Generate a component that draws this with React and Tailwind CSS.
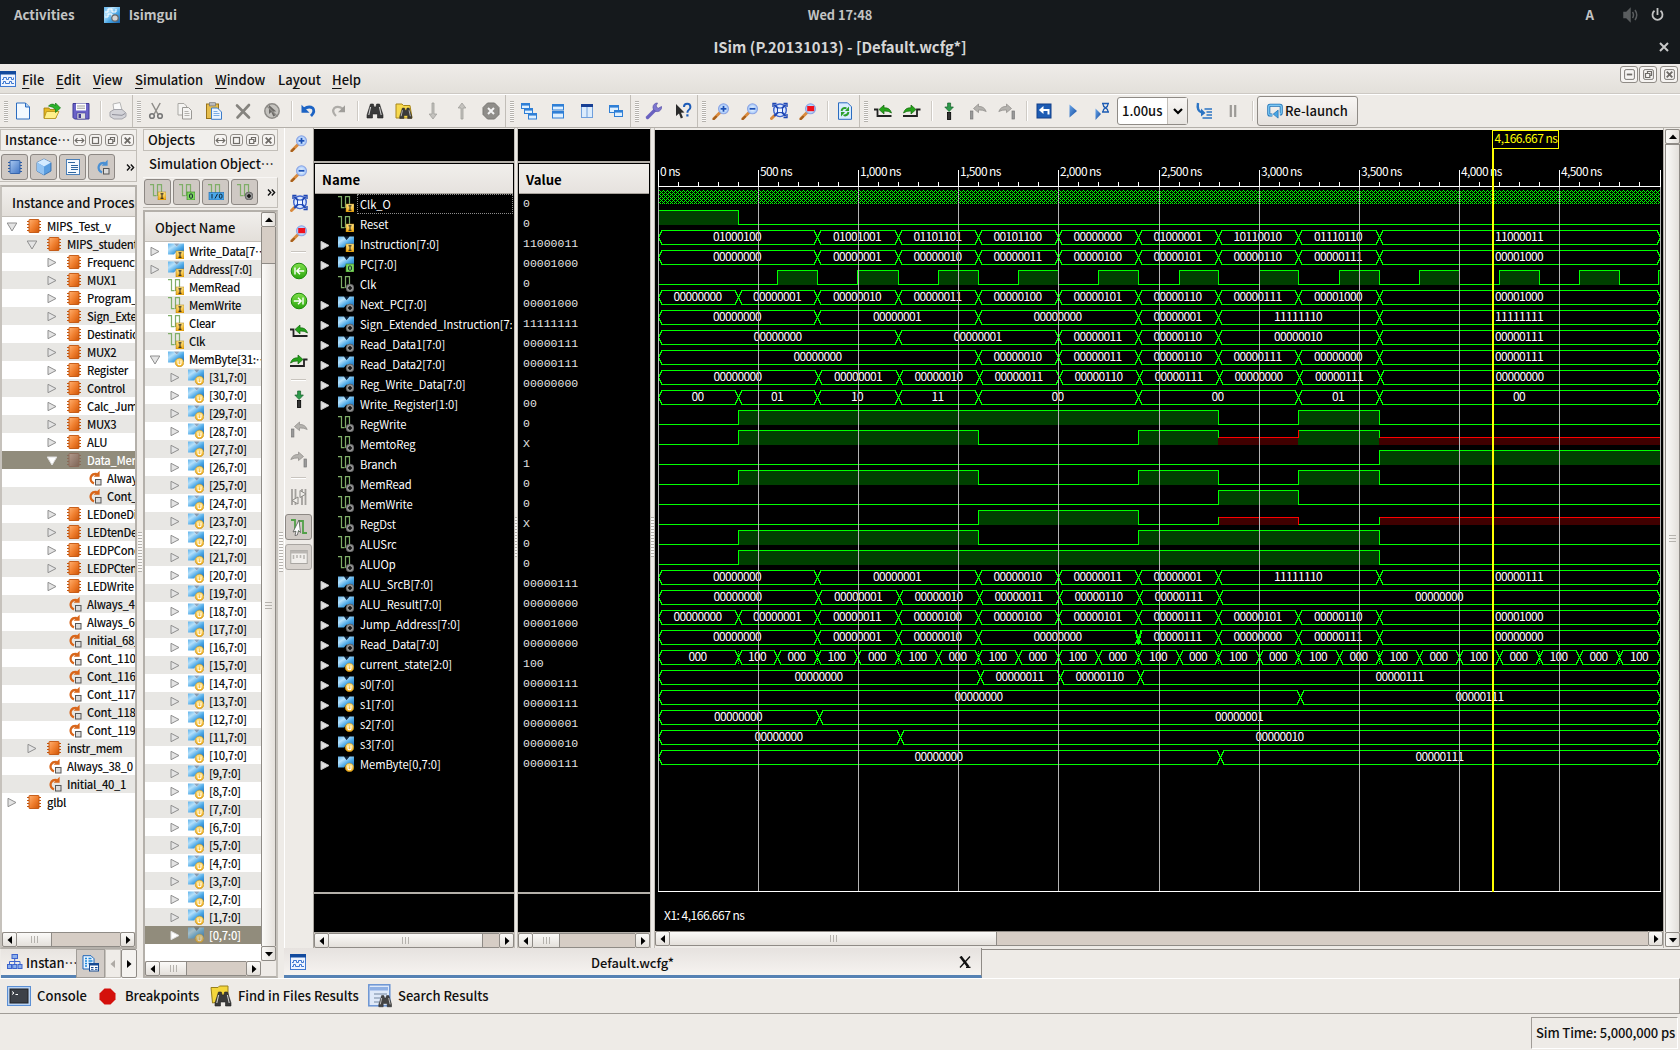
import React from "react";

const UI = "font-['Noto_Sans_CJK_SC','Noto_Sans',sans-serif]";

/* ---------- data ---------- */

const TREE = [
  [0, "open", "chip", "MIPS_Test_v"],
  [1, "open", "chip", "MIPS_student"],
  [2, "closed", "chip", "Frequency"],
  [2, "closed", "chip", "MUX1"],
  [2, "closed", "chip", "Program_Co"],
  [2, "closed", "chip", "Sign_Extend"],
  [2, "closed", "chip", "Destination"],
  [2, "closed", "chip", "MUX2"],
  [2, "closed", "chip", "Register"],
  [2, "closed", "chip", "Control"],
  [2, "closed", "chip", "Calc_Jump"],
  [2, "closed", "chip", "MUX3"],
  [2, "closed", "chip", "ALU"],
  [2, "open", "chip", "Data_Mem", true],
  [3, "", "proc", "Always_1"],
  [3, "", "proc", "Cont_12"],
  [2, "closed", "chip", "LEDoneDig"],
  [2, "closed", "chip", "LEDtenDec"],
  [2, "closed", "chip", "LEDPCone"],
  [2, "closed", "chip", "LEDPCten"],
  [2, "closed", "chip", "LEDWrite"],
  [2, "", "proc", "Always_48"],
  [2, "", "proc", "Always_60"],
  [2, "", "proc", "Initial_68_"],
  [2, "", "proc", "Cont_110"],
  [2, "", "proc", "Cont_116"],
  [2, "", "proc", "Cont_117"],
  [2, "", "proc", "Cont_118"],
  [2, "", "proc", "Cont_119"],
  [1, "closed", "chip", "instr_mem"],
  [1, "", "proc", "Always_38_0"],
  [1, "", "proc", "Initial_40_1"],
  [0, "closed", "chip", "glbl"],
];

const OBJECTS = [
  [0, "closed", "bus", "I", "Write_Data[7…"],
  [0, "closed", "bus", "I", "Address[7:0]"],
  [0, "", "sig", "I", "MemRead"],
  [0, "", "sig", "I", "MemWrite"],
  [0, "", "sig", "I", "Clear"],
  [0, "", "sig", "I", "Clk"],
  [0, "open", "bus", "V", "MemByte[31:…"],
  ...Array.from({ length: 32 }, (_, i) => [1, "closed", "bus", "V", `[${31 - i},7:0]`, i === 31]),
];

const Z = "00000000";
const b = (n) => n.toString(2).padStart(8, "0");
const END = 12.5;

const SIGNALS = [
  { n: "Clk_O", k: "I", v: "0", dense: true },
  { n: "Reset", k: "I", v: "0", lv: [[0, "1"], [1, "0"]] },
  { n: "Instruction[7:0]", k: "I", v: "11000011", bus: [[0, "01000100"], [2, "01001001"], [3, "01101101"], [4, "00101100"], [5, Z], [6, "01000001"], [7, "10110010"], [8, "01110110"], [9, "11000011"]] },
  { n: "PC[7:0]", k: "O", v: "00001000", bus: [[0, Z], ...[1, 2, 3, 4, 5, 6, 7, 8].map((i) => [i + 1, b(i)])] },
  { n: "Clk", k: "+", v: "0", lv: [[0, "0"], ...Array.from({ length: 11 }, (_, i) => [[i + 1.5, "1"], [i + 2, "0"]]).flat(), [12.48, "1"]] },
  { n: "Next_PC[7:0]", k: "+", v: "00001000", bus: [...[0, 1, 2, 3, 4, 5, 6, 7, 8].map((i) => [i, b(i)]), [9, b(8)]] },
  { n: "Sign_Extended_Instruction[7:0]", k: "+", v: "11111111", bus: [[0, Z], [2, b(1)], [4, Z], [6, b(1)], [7, "11111110"], [9, "11111111"]] },
  { n: "Read_Data1[7:0]", k: "+", v: "00000111", bus: [[0, Z], [3, b(1)], [5, b(3)], [6, b(6)], [7, b(2)], [9, b(7)]] },
  { n: "Read_Data2[7:0]", k: "+", v: "00000111", bus: [[0, Z], [4, b(2)], [5, b(3)], [6, b(6)], [7, b(7)], [8, Z], [9, b(7)]] },
  { n: "Reg_Write_Data[7:0]", k: "+", v: Z, off: 1, bus: [[0, Z], [2, b(1)], [3, b(2)], [4, b(3)], [5, b(6)], [6, b(7)], [7, Z], [8, b(7)], [9, Z]] },
  { n: "Write_Register[1:0]", k: "+", v: "00", bus: [[0, "00"], [1, "01"], [2, "10"], [3, "11"], [4, "00"], [6, "00"], [8, "01"], [9, "00"]] },
  { n: "RegWrite", k: "+", v: "0", lv: [[0, "0"], [1, "1"], [7, "0"], [8, "1"], [9, "0"]] },
  { n: "MemtoReg", k: "+", v: "X", lv: [[0, "0"], [1, "1"], [4, "0"], [6, "1"], [7, "X"], [8, "1"], [9, "X"]] },
  { n: "Branch", k: "+", v: "1", lv: [[0, "0"], [9, "1"]] },
  { n: "MemRead", k: "+", v: "0", lv: [[0, "0"], [1, "1"], [4, "0"], [6, "1"], [7, "0"], [8, "1"], [9, "0"]] },
  { n: "MemWrite", k: "+", v: "0", lv: [[0, "0"], [7, "1"], [8, "0"]] },
  { n: "RegDst", k: "+", v: "X", lv: [[0, "0"], [4, "1"], [6, "0"], [7, "X"], [8, "0"], [9, "X"]] },
  { n: "ALUSrc", k: "+", v: "0", lv: [[0, "0"], [1, "1"], [4, "0"], [6, "1"], [9, "0"]] },
  { n: "ALUOp", k: "+", v: "0", lv: [[0, "0"], [1, "1"], [9, "0"]] },
  { n: "ALU_SrcB[7:0]", k: "+", v: "00000111", bus: [[0, Z], [2, b(1)], [4, b(2)], [5, b(3)], [6, b(1)], [7, "11111110"], [9, b(7)]] },
  { n: "ALU_Result[7:0]", k: "+", v: Z, off: 1, bus: [[0, Z], [2, b(1)], [3, b(2)], [4, b(3)], [5, b(6)], [6, b(7)], [7, Z]] },
  { n: "Jump_Address[7:0]", k: "+", v: "00001000", bus: [[0, Z], [1, b(1)], [2, b(3)], [3, b(4)], [4, b(4)], [5, b(5)], [6, b(7)], [7, b(5)], [8, b(6)], [9, b(8)]] },
  { n: "Read_Data[7:0]", k: "+", v: Z, bus: [[0, Z], [2, b(1)], [3, b(2)], [4, Z], [6, b(7)], [7, Z], [8, b(7)], [9, Z]], glitch: [6] },
  { n: "current_state[2:0]", k: "V", v: "100", bus: [[0, "000"], ...Array.from({ length: 23 }, (_, i) => [1 + i / 2, i % 2 ? "000" : "100"])], ticks: true },
  { n: "s0[7:0]", k: "V", v: "00000111", off: 2, bus: [[0, Z], [4, b(3)], [5, b(6)], [6, b(7)]] },
  { n: "s1[7:0]", k: "V", v: "00000111", off: 2, bus: [[0, Z], [8, b(7)]] },
  { n: "s2[7:0]", k: "V", v: "00000001", off: 2, bus: [[0, Z], [2, b(1)]] },
  { n: "s3[7:0]", k: "V", v: "00000010", off: 2, bus: [[0, Z], [3, b(2)]] },
  { n: "MemByte[0,7:0]", k: "V", v: "00000111", off: 2, bus: [[0, Z], [7, b(7)]] },
];

/* ---------- small icons ---------- */

const Svg = ({ s = 16, vb = "0 0 16 16", children, className = "" }) => (
  <svg width={s} height={s} viewBox={vb} className={`block shrink-0 ${className}`} fill="none">
    {children}
  </svg>
);

const Defs = () => (
  <svg width="0" height="0" className="absolute">
    <defs>
      <linearGradient id="chipO" x1="0" y1="0" x2="1" y2="1"><stop offset="0" stopColor="#ffb070" /><stop offset=".5" stopColor="#f08030" /><stop offset="1" stopColor="#cf5608" /></linearGradient>
      <linearGradient id="chipB" x1="0" y1="0" x2="1" y2="1"><stop offset="0" stopColor="#a9c8f0" /><stop offset="1" stopColor="#3f74c4" /></linearGradient>
      <linearGradient id="chipG" x1="0" y1="0" x2="1" y2="1"><stop offset="0" stopColor="#b39a8c" /><stop offset="1" stopColor="#7d6455" /></linearGradient>
      <linearGradient id="busW" x1="0" y1="0" x2="1" y2="1"><stop offset="0" stopColor="#5fb2ea" /><stop offset=".3" stopColor="#b4e0fb" /><stop offset=".6" stopColor="#4aa7e6" /><stop offset="1" stopColor="#1763ad" /></linearGradient>
      <linearGradient id="gold" x1="0" y1="0" x2="0" y2="1"><stop offset="0" stopColor="#ffe68a" /><stop offset="1" stopColor="#f2a90e" /></linearGradient>
      <linearGradient id="play" x1="0" y1="0" x2="1" y2="1"><stop offset="0" stopColor="#6aa6ea" /><stop offset="1" stopColor="#124a9e" /></linearGradient>
      <radialGradient id="lens"><stop offset="0" stopColor="#fff" /><stop offset="1" stopColor="#9cc4fa" /></radialGradient>
      <linearGradient id="grn" x1="0" y1="0" x2="0" y2="1"><stop offset="0" stopColor="#7fe04a" /><stop offset="1" stopColor="#2ba50f" /></linearGradient>
    </defs>
  </svg>
);

const Chip = ({ fill = "url(#chipO)", leg = "#c2540c" }) => (
  <Svg>
    <path d="M1 3.500h14M1 6.500h14M1 9.500h14M1 12.500h14" stroke={leg} strokeWidth="1.200" />
    <rect x="3" y="1.500" width="10" height="13" rx=".6" fill={fill} stroke={leg} strokeWidth=".9" />
  </Svg>
);

const Proc = ({ c = "#d9661a" }) => (
  <Svg>
    <path d="M10.800 4A4.800 4.800 0 1 0 8 13.300" stroke={c} strokeWidth="2.300" />
    <path d="M13.600 .8v6H7.600z" fill={c} />
    <rect x="9.500" y="9.500" width="5.500" height="5.500" fill="#dcdcdc" stroke="#555" />
  </Svg>
);

const Badge = ({ k }) => {
  if (k === "I") return (<><rect x="8" y="8" width="8" height="8" fill="url(#gold)" stroke="#a87a10" strokeWidth=".5" /><path d="M10.500 9.800h3M12 9.800v4.600M10.500 14.300h3" stroke="#222" strokeWidth="1" /></>);
  if (k === "O") return (<><rect x="8" y="8" width="8" height="8" fill="#7fd660" stroke="#2e7d1a" strokeWidth=".6" /><rect x="10.600" y="10" width="2.800" height="4.200" rx="1" stroke="#112233" strokeWidth="1" /></>);
  if (k === "IO") return (<><rect x="1" y="8.500" width="15" height="7.500" fill="#4aa8ea" stroke="#1763ad" strokeWidth=".6" /><path d="M4 10v4.500M9.500 9.800L7 14.500" stroke="#112233" strokeWidth="1" /><rect x="11.400" y="10.200" width="2.600" height="4" rx="1" stroke="#112233" strokeWidth="1" /></>);
  if (k === "V") return (<><circle cx="11.500" cy="11.500" r="4.300" fill="url(#gold)" stroke="#b98a1c" strokeWidth=".6" /><path d="M10 9.500v2.900q0 1.300 1.500 1.300t1.500-1.300V9.500" stroke="#fff" strokeWidth="1.100" /></>);
  return (<><circle cx="12" cy="12" r="4" fill="#8f8f8f" stroke="#4a4a4a" strokeWidth=".6" /><path d="M10 12h4M12 10v4" stroke="#111" strokeWidth="1.500" /></>);
};

const SigIcon = ({ k }) => (
  <Svg><path d="M0 .7h3.500v11h3M7.500 12V.7h4V9" stroke="#7fae68" strokeWidth="1.200" /><Badge k={k} /></Svg>
);
const BusIcon = ({ k, dim }) => (
  <Svg className={dim ? "opacity-60" : ""}>
    <path d="M0 .5h6l2.500 3.500L11.500 .5H16v10.500H11L8.500 8.500 6 11.500H0z" fill="url(#busW)" />
    <path d="M6 .5h5.500L8.700 3.800z" fill="#1c4c80" fillOpacity=".5" /><Badge k={k} />
  </Svg>
);

const TriR = ({ fill = "#e4e4e4", stroke = "#8f8f8f" }) => (
  <svg width="10" height="11" viewBox="0 0 10 11" className="block shrink-0"><path d="M1 1.300v8.400L9 5.500z" fill={fill} stroke={stroke} /></svg>
);
const TriD = ({ fill = "#e4e4e4", stroke = "#8f8f8f" }) => (
  <svg width="12" height="10" viewBox="0 0 12 10" className="block shrink-0"><path d="M1.200 1h9.600L6 9z" fill={fill} stroke={stroke} /></svg>
);

const Mag = ({ t }) => (
  <Svg s={18} vb="0 0 18 18">
    <path d="M2 16.500L8 10.500" stroke="#d98a3d" strokeWidth="3" strokeLinecap="round" />
    <path d="M1.500 17.200L4 14.800" stroke="#a55f1d" strokeWidth="2" strokeLinecap="round" />
    <circle cx="11.500" cy="6.800" r="5" fill="url(#lens)" stroke="#8fa6e4" strokeWidth="1.100" />
    {t !== "sel" && <path d="M8.600 6.800h5.800" stroke="#1a4fb5" strokeWidth="1.800" />}
    {t === "in" && <path d="M11.500 3.900v5.800" stroke="#1a4fb5" strokeWidth="1.800" />}
    {t === "sel" && <rect x="8.200" y="4" width="7" height="5.200" fill="#f0101c" />}
  </Svg>
);
const MagFit = () => (
  <Svg s={18} vb="0 0 18 18">
    <path d="M1.500 16.500L4.500 13.500" stroke="#d98a3d" strokeWidth="3" strokeLinecap="round" />
    <circle cx="10" cy="8.300" r="6.300" fill="#dce9ff" stroke="#3d63cd" strokeWidth="1.400" />
    <path d="M4.300 2.600l11.400 11.400M15.700 2.600L4.300 14" stroke="#1d46b4" strokeWidth="1.800" />
    <path d="M3 5V1.500h3.500M13.500 1.500H17V5M17 12v3.500h-3.500" stroke="#1d46b4" strokeWidth="1.400" />
    <rect x="7.500" y="6" width="5" height="4.600" fill="#eef4ff" stroke="#1d46b4" />
  </Svg>
);
const EdgePrev = () => (
  <Svg s={18} vb="0 0 18 18"><path d="M0 7.500h3.500v6.500h14" stroke="#222" strokeWidth="1.800" /><path d="M5 7.500l5-4.500v2.800q6-.4 7.500 5.200-3-2.300-7.500-2v3z" fill="#25a31a" stroke="#14690f" strokeWidth=".7" /></Svg>
);
const EdgeNext = () => (
  <Svg s={18} vb="0 0 18 18"><path d="M0 14h14V7.500h3.500" stroke="#222" strokeWidth="1.800" /><path d="M13 7.500L8 3v2.800Q2 5.400.5 11q3-2.300 7.500-2v3z" fill="#25a31a" stroke="#14690f" strokeWidth=".7" /></Svg>
);
const Marker = () => (
  <Svg s={18} vb="0 0 18 18"><rect x="7.500" y="10.500" width="3.200" height="7" fill="#333" stroke="#000" strokeWidth=".8" /><path d="M7.600 1h3v4h2.800L9.100 9.600 4.800 5h2.800z" fill="#2c9a4a" stroke="#16602a" strokeWidth=".7" /></Svg>
);
const GreyPrev = () => (
  <Svg s={18} vb="0 0 18 18"><rect x="1.500" y="9" width="2.400" height="8" fill="#999" stroke="#777" strokeWidth=".7" /><path d="M4.500 6.500L9.500 2v2.500Q15 4 17.200 9.500 13.500 7.600 9.500 8v2.600z" fill="#b4b2ae" stroke="#8c8a86" strokeWidth=".7" /></Svg>
);
const GreyNext = () => (
  <Svg s={18} vb="0 0 18 18"><rect x="14" y="9" width="2.400" height="8" fill="#999" stroke="#777" strokeWidth=".7" /><path d="M13.500 6.500L8.500 2v2.500Q3 4 .8 9.500 4.500 7.600 8.500 8v2.600z" fill="#b4b2ae" stroke="#8c8a86" strokeWidth=".7" /></Svg>
);
const Binoc = ({ dx = 0, dy = 0, k = 1, c = "#3a3a3a" }) => (
  <g transform={`translate(${dx} ${dy}) scale(${k})`}>
    <path d="M4.500 2h2.800l.9 3h1.600l.9-3h2.800L17 13v3h-5.500v-4h-5v4H1v-3z" fill={c} stroke="#222" strokeWidth=".6" />
    <path d="M4.600 5L2.800 13M13.400 5l1.800 8" stroke="#cfcfcf" strokeWidth="1.100" />
  </g>
);
const Win = ({ x, y, w, h, c = "#2f7fd6" }) => (
  <g><rect x={x + 0.5} y={y + 0.5} width={w} height={h} fill="#dff0ff" stroke={c} /><rect x={x} y={y} width={w + 1} height="2.600" fill={c} /></g>
);
const Green = ({ next }) => (
  <Svg s={18} vb="0 0 18 18"><circle cx="9" cy="9" r="7.800" fill="url(#grn)" stroke="#1e8a0c" />{next
    ? <path d="M3.800 9h7M8 5.800L11.200 9 8 12.200M13 5.400v7.200" stroke="#fff" strokeWidth="1.400" />
    : <path d="M14.200 9h-7M10 5.800L6.800 9l3.200 3.200M5 5.400v7.200" stroke="#fff" strokeWidth="1.400" />}</Svg>
);

const I = {
  new: <Svg s={18} vb="0 0 18 18"><path d="M2.500 1h9l4 4v12h-13z" fill="#f3f9ff" stroke="#2b6cc0" /><path d="M11.500 1v4h4" fill="#a9cdf5" stroke="#2b6cc0" /></Svg>,
  open: <Svg s={18} vb="0 0 18 18"><path d="M1 6h5l1 1.500h6V16H1z" fill="#e8b820" stroke="#9c7a10" strokeWidth=".8" /><path d="M3.500 9.500H16L12.500 16.500H1z" fill="#fff08a" stroke="#b28e14" strokeWidth=".8" /><path d="M5.500 4Q9 .5 12.500 3.500V1L17.500 6 12.500 10.500V7.500Q10 4.500 5.500 4z" fill="#2bb32b" stroke="#167a16" strokeWidth=".7" /></Svg>,
  save: <Svg s={18} vb="0 0 18 18"><path d="M1 1.500h16v15.500H2.500L1 15.500z" fill="#6a62c8" stroke="#3f3a94" /><rect x="4" y="1.500" width="10" height="7" fill="#fff" /><path d="M5 4h8M5 6.200h8" stroke="#999" /><rect x="5" y="11" width="8.500" height="6" fill="#dedede" stroke="#3f3a94" strokeWidth=".6" /><rect x="6.500" y="12" width="2.500" height="4" fill="#3f3a94" /></Svg>,
  print: <Svg s={18} vb="0 0 18 18"><path d="M5 9L4 2l7-1.500 2 7.500z" fill="#fafafa" stroke="#b5b5b5" /><path d="M1 10l4-2.500h8L17 11v3.500L13 17H5l-4-2.500z" fill="#d3d3d8" stroke="#a5a5ab" /><path d="M3 12.500l10 .8 3-1.800" stroke="#8f8f99" /></Svg>,
  cut: <Svg s={18} vb="0 0 18 18"><path d="M4.800 1l6 11M13.200 1l-6 11" stroke="#8e8c88" strokeWidth="1.500" /><circle cx="5" cy="14" r="2.300" stroke="#777" strokeWidth="1.600" /><circle cx="13" cy="14" r="2.300" stroke="#777" strokeWidth="1.600" /></Svg>,
  copy: <Svg s={18} vb="0 0 18 18"><path d="M2 1.500h6l2.500 2.500v9H2z" fill="#f5f4f2" stroke="#aaa8a4" /><path d="M6.500 5.500h6l3 3V17h-9z" fill="#f5f4f2" stroke="#9a9894" /><path d="M8.500 9.500h4M8.500 11.500h5M8.500 13.500h5" stroke="#b5b3af" /></Svg>,
  paste: <Svg s={18} vb="0 0 18 18"><rect x="1.500" y="2" width="12" height="14.500" fill="#e6bd4c" stroke="#98731a" /><rect x="4.500" y=".7" width="6" height="3.200" fill="#bbb" stroke="#777" strokeWidth=".7" /><path d="M6.500 6h6l4 4v7.300h-10z" fill="#eaf4ff" stroke="#3d7cc9" /><path d="M8.500 9.500h4M8.500 11.500h6M8.500 13.500h6" stroke="#7caee4" /></Svg>,
  del: <Svg s={18} vb="0 0 18 18"><path d="M3 3.500L15 15.500M15 3L3.500 15.500" stroke="#86847f" strokeWidth="2.600" strokeLinecap="round" /></Svg>,
  desel: <Svg s={18} vb="0 0 18 18"><circle cx="9" cy="9" r="7.200" fill="#c4c2be" stroke="#8c8a86" strokeWidth="1.500" /><path d="M6 3v9l2.300-2 2 4.500 2-1-2-4h3z" fill="#6b6966" /><path d="M4 4l10.500 10.500" stroke="#8c8a86" strokeWidth="1.200" /></Svg>,
  undo: <Svg s={18} vb="0 0 18 18"><path d="M4 6.800Q9 3.500 12.800 6.200 15.500 9.500 11 14" stroke="#1c63c4" strokeWidth="2.800" /><path d="M1.500 2.800v8h8z" fill="#1c63c4" /></Svg>,
  redo: <Svg s={18} vb="0 0 18 18"><path d="M14 6.800Q9 3.500 5.200 6.200 2.500 9.500 7 14" stroke="#aeaca8" strokeWidth="2.200" /><path d="M16 3.200v7H9z" fill="#a09e9a" /></Svg>,
  find: <Svg s={18} vb="0 0 18 18"><Binoc /></Svg>,
  findf: <Svg s={18} vb="0 0 18 18"><path d="M1 2h6l1.500 1.500H15L17 16H1z" fill="#f7d94e" stroke="#a8861a" /><Binoc dx={4} dy={4.5} k={0.75} /></Svg>,
  down: <Svg s={18} vb="0 0 18 18"><path d="M8 1h2v11h2.800L9 17l-3.800-5H8z" fill="#c4c2be" stroke="#a09e9a" strokeWidth=".8" /></Svg>,
  up: <Svg s={18} vb="0 0 18 18"><path d="M8 17h2V6h2.800L9 1 5.200 6H8z" fill="#c4c2be" stroke="#a09e9a" strokeWidth=".8" /></Svg>,
  stop: <Svg s={18} vb="0 0 18 18"><path d="M5.500 1h7L17 5.500v7L12.500 17h-7L1 12.500v-7z" fill="#8f8d89" stroke="#7a7874" /><path d="M6 6l6 6M12 6l-6 6" stroke="#f4f4f4" strokeWidth="2" /></Svg>,
  cascade: <Svg s={18} vb="0 0 18 18"><Win x={1} y={1} w={8} h={5} /><Win x={4} y={6} w={8} h={5} /><Win x={8} y={11} w={8} h={5.5} /></Svg>,
  tileH: <Svg s={18} vb="0 0 18 18"><Win x={3} y={2} w={11} h={5.5} /><Win x={3} y={9} w={11} h={6.5} /></Svg>,
  tileV: <Svg s={18} vb="0 0 18 18"><rect x="3.500" y="3.500" width="11" height="12" fill="#dcecfc" stroke="#6f9fdc" /><path d="M9 4v11" stroke="#6f9fdc" /><rect x="3" y="2" width="12" height="3" fill="#173f94" /></Svg>,
  layer: <Svg s={18} vb="0 0 18 18"><Win x={2} y={3} w={9} h={7} /><Win x={7} y={8} w={8} h={6} /></Svg>,
  wrench: <Svg s={18} vb="0 0 18 18"><path d="M2.500 15.500l8-8" stroke="#6a62c0" strokeWidth="3.400" strokeLinecap="round" /><path d="M16.500 4.500a4.300 4.300 0 1 1-4-3.500L11 4l2 2.500z" fill="#7d76cf" stroke="#554da8" strokeWidth=".7" /></Svg>,
  help: <Svg s={18} vb="0 0 18 18"><path d="M2 2v12l3-2.600 1.800 5 2.200-1-2-4.700 3.500-.2z" fill="#2b2b2b" /><path d="M10 5q0-3.300 3.200-3.300T16.400 5q0 2-1.700 3-1.300.9-1.300 2.700" stroke="#1d5cb8" strokeWidth="2" /><rect x="12.300" y="12.300" width="2.200" height="2.200" fill="#1d5cb8" /></Svg>,
  refresh: <Svg s={18} vb="0 0 18 18"><path d="M2.500 .8h9l4 4v12.500h-13z" fill="#d8ecff" stroke="#2b6cc0" /><path d="M5.500 9q.5-3 3.500-3.200l1.500.5M12.500 10q-.5 3-3.500 3.500l-1.500-.5" stroke="#2ba02b" strokeWidth="1.800" /><path d="M13 4.500V9H9zM5 14.500V10h4z" fill="#2ba02b" /></Svg>,
  restart: <Svg s={18} vb="0 0 18 18"><rect x="2" y="2" width="14" height="14" fill="#1d5cb4" stroke="#123f88" /><path d="M13.500 12.500V8H7" stroke="#fff" strokeWidth="2" /><path d="M8.500 4v8L3.800 8z" fill="#fff" /></Svg>,
  play: <Svg s={18} vb="0 0 18 18"><path d="M5.500 2.500v13L13 9z" fill="url(#play)" /></Svg>,
  playh: <Svg s={18} vb="0 0 18 18"><path d="M2.500 6.500V18L8 12z" fill="url(#play)" /><path d="M9 1.500h7M9 10h7M10 2q0 2.500 2.500 3.800Q15 7 15 9.500M15 2q0 2.500-2.500 3.800Q10 7 10 9.500" stroke="#1d5cb4" strokeWidth="1.300" /></Svg>,
  step: <Svg s={18} vb="0 0 18 18"><path d="M3 1Q1.500 9 7 10.500" stroke="#2b74c4" strokeWidth="2.400" /><path d="M6 6.500v8L10.500 11z" fill="#2b74c4" /><path d="M9.500 7h7.500M11.500 10h5.500M11.500 13h5.500M7.500 16h9.500" stroke="#2b74c4" strokeWidth="1.300" /></Svg>,
  pause: <Svg s={18} vb="0 0 18 18"><path d="M6.800 3v12M11.200 3v12" stroke="#9c9a96" strokeWidth="2.200" /></Svg>,
  relaunch: <Svg s={16} vb="0 0 18 18"><path d="M6 13.500H3.500q-1.500 0-1.500-1.500V4q0-1.500 1.500-1.500h11Q16 2.500 16 4v7q0 1.500-1.500 1.500" stroke="#1c6fb4" strokeWidth="3.400" /><path d="M6 13.500H3.500q-1.500 0-1.500-1.500V4q0-1.500 1.500-1.500h11Q16 2.500 16 4v7q0 1.500-1.500 1.500" stroke="#7cc8f4" strokeWidth="1.600" /><path d="M12.500 8v9L7 12.500z" fill="#4aa6e4" stroke="#1c6fb4" strokeWidth=".8" /></Svg>,
  swap: <Svg s={18} vb="0 0 18 18"><path d="M2 1v16M5.500 1v16M12 1v16M15.500 1v16" stroke="#a3a19d" strokeWidth="1.800" /><path d="M10 2.500l6 3.500-6 3.500zM8 9l-6 3.500L8 16z" fill="#efede9" stroke="#8c8a86" /></Svg>,
  snap: <Svg s={18} vb="0 0 18 18"><path d="M1 2h4v12M9 14V2.500M13 2v13h4M9 3h4" stroke="#52a048" strokeWidth="1.800" /><path d="M9 2L3 14l3-.8-1 4.300 2.300-.5L8.500 12.500l2 2z" fill="#fff" stroke="#555" strokeWidth=".8" /></Svg>,
  ruler: <Svg s={18} vb="0 0 18 18"><rect x=".8" y="2.500" width="16.400" height="13" fill="#f3f2ef" stroke="#8c8a86" /><rect x=".8" y="2.500" width="16.400" height="3" fill="#a3a19d" /><path d="M3.500 7v4M7 7v3M10.500 7v3M14 7v4" stroke="#a3a19d" strokeWidth="1.600" /></Svg>,
  wave: <Svg><rect x=".5" y=".5" width="15" height="15" fill="#eef4ff" stroke="#3e78d0" /><rect width="16" height="3.500" fill="#124a9e" /><path d="M2 8.500h1.500v-2h3v2h2v-2h3v2h2v-2M2 12.500h1.500v-2h2v2h4v-2h2v2H14" stroke="#3e78d0" /></Svg>,
  cube: <Svg s={18} vb="0 0 18 18"><path d="M9 1l7 3.500v8.500L9 17l-7-4V4.500z" fill="#5b9ee0" stroke="#2e6aac" strokeWidth=".8" /><path d="M9 1l7 3.500L9 8.500 2 4.500z" fill="#d4ebff" /><path d="M2 4.500l7 4V17l-7-4z" fill="#94c4f2" /></Svg>,
  doc: <Svg s={18} vb="0 0 18 18"><rect x="2.500" y="1.500" width="13" height="15" fill="#f5faff" stroke="#4a7fb8" /><path d="M4 4.500h7M7 7.500h7M7 9.500h7M7 11.500h7M4 14.500h8" stroke="#2f669f" /></Svg>,
  hier: <Svg><rect x="5" y=".5" width="5.500" height="4" fill="#8db0ec" stroke="#3d63cd" /><rect x=".5" y="10.500" width="4" height="4" fill="#8db0ec" stroke="#3d63cd" /><rect x="11" y="10.500" width="4" height="4" fill="#8db0ec" stroke="#3d63cd" /><rect x="5.700" y="10.500" width="4" height="4" fill="#8db0ec" stroke="#3d63cd" /><path d="M7.700 4.500v6M2.500 10.500V7.500h10.500v3" stroke="#3d63cd" /></Svg>,
  docs: <Svg s={17} vb="0 0 17 17"><path d="M1 .7h8l3 3V14H1z" fill="#eaf4ff" stroke="#1d66b8" /><path d="M3 3.500h2M3 6h2M3 8.500h2M3 11h2M6.500 3.500h3M6.500 6h4M6.500 8.500h3" stroke="#1d86d8" strokeWidth="1.300" /><rect x="7.500" y="8.500" width="9" height="7.500" fill="#fff" stroke="#174a92" /><rect x="7" y="8" width="10" height="2.500" fill="#174a92" /><path d="M9 12.500h2.500M13 12.500h2.500M9 14.300h2.500M13 14.300h2.500" stroke="#174a92" /></Svg>,
};

/* ---------- chrome pieces ---------- */

const Grip = () => (
  <div className="flex h-full w-2 shrink-0 items-center pl-1">
    <div className="h-[21px] w-1 bg-[repeating-linear-gradient(to_bottom,#b5b2ad_0_1px,#fbfaf9_1px_2px)]" />
  </div>
);
const Sep = () => (
  <div className="flex h-full w-2 shrink-0 items-center justify-end pr-px"><div className="h-5 w-0.5 border-l border-[#cfcbc5] bg-white" /></div>
);
const TB = ({ children }) => <div className="flex h-full w-[29px] shrink-0 items-center justify-center">{children}</div>;
const Group = ({ w, items }) => (
  <div className={`flex h-full shrink-0 items-center border-r border-[#c2beb8] ${w}`}>
    <Grip />
    {items.map((it, i) => (it === "|" ? <Sep key={i} /> : <TB key={i}>{it}</TB>))}
  </div>
);

const RoundBtn = ({ t, big }) => (
  <div className={`flex shrink-0 items-center justify-center rounded-[3px] border border-[#8f8b86] bg-[#f6f4f2] ${big ? "h-[17px] w-[18px]" : "h-[12px] w-[13px]"}`}>
    <svg width="11" height="11" viewBox="0 0 11 11" fill="none" stroke="#6f6c68" strokeWidth="1.200">
      {big && <rect x=".6" y=".6" width="9.800" height="9.800" rx="1.500" strokeWidth=".9" />}
      {t === "float" && <path d="M1 5.500h9M3.500 3.200L1.200 5.500l2.300 2.300M7.500 3.200l2.300 2.300-2.300 2.300" />}
      {t === "max" && <rect x="2.500" y="2.500" width="6" height="6" />}
      {t === "rest" && <path d="M2.500 4.500h4.300v4H2.500zM4.500 4.300V2.500h4v4H7" />}
      {t === "close" && <path d="M2.700 2.700l5.600 5.600M8.300 2.700L2.700 8.300" strokeWidth="1.900" />}
      {t === "min" && <path d="M2.800 5.500h5.400" strokeWidth="1.800" />}
    </svg>
  </div>
);

const DockTitle = ({ children }) => (
  <div className="mt-px flex h-[22px] shrink-0 items-center border border-[#c2beb8] bg-[#f1efec] pl-1 pr-[2px]">
    <span className="flex-1 overflow-hidden whitespace-nowrap text-[13px] font-medium leading-5">{children}</span>
    <div className="flex gap-[3px]"><RoundBtn t="float" /><RoundBtn t="max" /><RoundBtn t="rest" /><RoundBtn t="close" /></div>
  </div>
);

const Toggle = ({ children }) => (
  <div className="flex h-[26px] w-[27px] shrink-0 items-center justify-center rounded-[3px] border border-[#8d8884] bg-[#cfc9c4]">{children}</div>
);
const Chevron = () => (
  <svg width="9" height="7" viewBox="0 0 9 7" fill="none" stroke="#111" strokeWidth="1.400" className="mr-px ml-auto shrink-0"><path d="M1 .5l2.800 3L1 6.500M4.800 .5l2.800 3-2.800 3" /></svg>
);

const ARROWS = { l: "M8 2v8L3.500 6z", r: "M4 2v8l4.500-4z", u: "M2 8h8L6 3.500z", d: "M2 4h8L6 8.500z" };
const Arrow = ({ d, c = "#000" }) => (
  <svg width="12" height="12" viewBox="0 0 12 12" className="block shrink-0"><path d={ARROWS[d]} fill={c} /></svg>
);
const SBtn = ({ d, v }) => (
  <div className={`flex shrink-0 items-center justify-center rounded-[2px] border border-[#8f8b86] ${v ? "h-[15px] w-full bg-gradient-to-r" : "h-full w-[15px] bg-gradient-to-b"} from-[#fbfaf8] to-[#e4e0db]`}><Arrow d={d} /></div>
);
const HScroll = ({ thumb, className = "" }) => (
  <div className={`flex h-[15px] shrink-0 bg-[#d6cdc5] ${className}`}>
    <SBtn d="l" />
    <div className={`flex items-center justify-center gap-[2px] border-y border-r border-[#8f8b86] bg-gradient-to-b from-[#fbfaf8] to-[#e4e0db] ${thumb}`}>
      <i className="h-[7px] w-px bg-[#b5b2ad]" /><i className="h-[7px] w-px bg-[#b5b2ad]" /><i className="h-[7px] w-px bg-[#b5b2ad]" />
    </div>
    <div className="flex-1 border-y border-[#8f8b86]" />
    <SBtn d="r" />
  </div>
);
const VScroll = ({ lead = "", className = "" }) => (
  <div className={`flex w-[15px] shrink-0 flex-col bg-[#d6cdc5] ${className}`}>
    <SBtn d="u" v />
    {lead && <div className={`border-x border-[#8f8b86] ${lead}`} />}
    <div className="flex flex-1 flex-col items-center justify-center gap-[2px] border-x border-t border-[#8f8b86] bg-gradient-to-r from-[#fbfaf8] to-[#e4e0db]">
      <i className="h-px w-[7px] bg-[#b5b2ad]" /><i className="h-px w-[7px] bg-[#b5b2ad]" /><i className="h-px w-[7px] bg-[#b5b2ad]" />
    </div>
    <SBtn d="d" v />
  </div>
);
const Splitter = ({ w, pos = "pt-[404px]" }) => (
  <div className={`flex shrink-0 justify-center ${pos} ${w}`}>
    <div className="h-10 w-1 bg-[repeating-linear-gradient(to_bottom,#b5b2ad_0_1px,#fbfaf9_1px_3px)]" />
  </div>
);

const INDENT = ["pl-0", "pl-5", "pl-10", "pl-[60px]"];
const Row = ({ level, arrow, icon, label, sel, i, first }) => (
  <div className={`flex h-[18px] shrink-0 items-center overflow-hidden whitespace-nowrap ${INDENT[level]} ${sel ? "bg-[#918c7c] text-white" : i % 2 ? "bg-[#e8e7e4]" : "bg-white"}`}>
    <div className={`flex shrink-0 items-center justify-center pt-px ${first}`}>
      {arrow === "open" && <TriD {...(sel ? { fill: "#fff", stroke: "#ddd" } : {})} />}
      {arrow === "closed" && <TriR {...(sel ? { fill: "#fff", stroke: "#ddd" } : {})} />}
    </div>
    {icon}
    <span className="pl-[5px] text-[11.200px] font-medium leading-[18px] tracking-[-0.3px]">{label}</span>
  </div>
);

/* ---------- panels ---------- */

const InstancePanel = () => (
  <div className="flex w-[137px] shrink-0 flex-col">
    <DockTitle>Instance…</DockTitle>
    <div className="flex h-[31px] shrink-0 items-center gap-[2px] border-b border-r border-[#c2beb8] pl-px pt-0.5">
      <Toggle><Chip fill="url(#chipB)" leg="#2e5ea6" /></Toggle>
      <Toggle>{I.cube}</Toggle>
      <Toggle>{I.doc}</Toggle>
      <Toggle><Proc c="#4a90d4" /></Toggle>
      <Chevron />
    </div>
    <div className="mt-[3px] flex h-[764px] shrink-0 flex-col border-2 border-[#b4b0aa] border-l-[#c6c2bc] bg-white">
      <div className="flex h-[30px] shrink-0 items-center overflow-hidden whitespace-nowrap border-b border-[#c2beb8] bg-gradient-to-b from-[#f1efec] to-[#e3dfda] pl-2.5 pt-0.5 text-[13px] font-medium tracking-[-0.05px]">Instance and Process</div>
      <div className="flex flex-1 flex-col overflow-hidden">
        {TREE.map(([lv, a, ic, t, sel], i) => (
          <Row key={i} i={i} level={lv} arrow={a} label={t} sel={sel} first="w-6 pr-1"
            icon={ic === "chip" ? <Chip {...(sel ? { fill: "url(#chipG)", leg: "#8a6a58" } : {})} /> : <Proc />} />
        ))}
      </div>
      <HScroll thumb="w-[35px]" />
    </div>
    <div className="flex h-[29px] shrink-0 pl-px">
      <div className="flex w-[75px] shrink-0 items-center overflow-hidden border-b-[3px] border-[#5682b4] bg-gradient-to-b from-[#e8e4e0] to-[#f6f3f0] pl-1.5">
        {I.hier}<span className="whitespace-nowrap pl-[3px] pt-0.5 text-[13px] font-medium">Instan…</span>
      </div>
      <div className="flex w-[29px] shrink-0 items-center justify-center border border-[#a19d98] bg-[#d2ccc7]">{I.docs}</div>
      <div className="flex w-4 items-center justify-center border border-[#c6c2bc] bg-[#efece8]"><Arrow d="l" c="#aeaaa5" /></div>
      <div className="flex w-4 items-center justify-center rounded-[2px] border border-[#8f8b86] bg-[#f4f2ef]"><Arrow d="r" /></div>
    </div>
  </div>
);

const ObjectsPanel = () => (
  <div className="flex w-[135px] shrink-0 flex-col">
    <DockTitle>Objects</DockTitle>
    <div className="flex h-[26px] shrink-0 items-center whitespace-nowrap pl-1.5 text-[13px] font-medium">Simulation Object…</div>
    <div className="flex h-[31px] shrink-0 items-center gap-[2px] border-y border-r border-[#c2beb8] border-t-[#f8f6f4] pb-px pl-px">
      {["I", "O", "IO", "+"].map((k) => <Toggle key={k}><SigIcon k={k} /></Toggle>)}
      <Chevron />
    </div>
    <div className="mt-[2px] flex h-[768px] shrink-0 flex-col border-2 border-[#b4b0aa] border-r-[#c6c2bc] bg-white">
      <div className="flex h-[749px]">
        <div className="flex w-[116px] flex-col overflow-hidden">
          <div className="flex h-[30px] shrink-0 items-center overflow-hidden whitespace-nowrap border-b border-[#c2beb8] bg-gradient-to-b from-[#f1efec] to-[#e3dfda] pl-2.5 pt-0.5 text-[13px] font-medium">Object Name</div>
          {OBJECTS.map(([lv, a, t, k, label, sel], i) => (
            <Row key={i} i={i} level={lv} arrow={a} label={label} sel={sel} first="w-[23px] pr-1"
              icon={t === "bus" ? <BusIcon k={k} dim={sel} /> : <SigIcon k={k} />} />
          ))}
        </div>
        <VScroll lead="h-9" />
      </div>
      <div className="flex bg-[#efebe7]"><HScroll thumb="w-[27px]" className="w-[116px]" /></div>
    </div>
  </div>
);

const VItem = ({ children }) => <div className="flex h-[30px] w-full shrink-0 items-center justify-center">{children}</div>;
const VSep = () => <div className="mx-auto h-2 w-[15px] shrink-0 pt-[3px]"><div className="h-0.5 border-t border-[#c8c4be] bg-white" /></div>;
const SideBar = () => (
  <div className="flex w-[29px] shrink-0 flex-col border-l border-white pr-px">
    <VItem><Mag t="in" /></VItem>
    <VItem><Mag t="out" /></VItem>
    <VItem><MagFit /></VItem>
    <VItem><Mag t="sel" /></VItem>
    <VSep />
    <VItem><Green /></VItem>
    <VItem><Green next /></VItem>
    <VItem><EdgePrev /></VItem>
    <VItem><EdgeNext /></VItem>
    <VSep />
    <VItem><Marker /></VItem>
    <VItem><GreyPrev /></VItem>
    <VItem><GreyNext /></VItem>
    <VSep />
    <VItem>{I.swap}</VItem>
    <VItem><Toggle>{I.snap}</Toggle></VItem>
    <VItem><div className="opacity-70"><Toggle>{I.ruler}</Toggle></div></VItem>
  </div>
);

const ColHead = ({ children }) => (
  <div className="mt-px flex h-[30px] shrink-0 items-center border-b border-[#a8a39d] bg-gradient-to-b from-[#f1efec] to-[#e6e2de] pl-[7px] pt-0.5 text-[13.200px] font-bold text-black">{children}</div>
);

const NamePanel = () => (
  <div className="flex w-[201px] shrink-0 flex-col overflow-hidden border-l border-[#aaa6a0] pt-px">
    <div className="h-8 shrink-0 bg-black" />
    <div className="h-[2px] shrink-0 bg-[#b4b0aa]" />
    <div className="flex h-[729px] shrink-0 flex-col overflow-hidden bg-black px-px">
      <ColHead>Name</ColHead>
      {SIGNALS.map((s, i) => (
        <div key={s.n} className="flex h-5 shrink-0 items-center overflow-hidden">
          <div className="flex w-[23px] shrink-0 items-center pl-[5px] pt-0.5">{s.bus && <TriR fill="#e2e2e2" stroke="#c4c4c4" />}</div>
          {s.bus ? <BusIcon k={s.k} /> : <SigIcon k={s.k} />}
          <div className={`ml-[3px] flex h-5 flex-1 items-center overflow-hidden border border-dotted pb-px pl-0.5 ${i === 0 ? "border-[#8c8c8c]" : "border-transparent"}`}>
            <span className="whitespace-nowrap text-[11.200px] leading-[18px] text-white tracking-[-0.05px]">{s.n}</span>
          </div>
        </div>
      ))}
    </div>
    <div className="h-[2px] shrink-0 bg-[#b4b0aa]" />
    <div className="h-[38px] shrink-0 bg-black" />
    <div className="h-px shrink-0 bg-[#b4b0aa]" />
    <HScroll thumb="w-[154px]" />
  </div>
);

const ValuePanel = () => (
  <div className="flex w-[132px] shrink-0 flex-col overflow-hidden pt-px">
    <div className="h-8 shrink-0 bg-black" />
    <div className="h-[2px] shrink-0 bg-[#b4b0aa]" />
    <div className="flex h-[729px] shrink-0 flex-col bg-black px-px">
      <ColHead>Value</ColHead>
      {SIGNALS.map((s) => (
        <div key={s.n} className="flex h-5 shrink-0 items-center pb-px pl-1 font-['Liberation_Mono',monospace] text-[11.500px] text-[#e4e4e4]">{s.v}</div>
      ))}
    </div>
    <div className="h-[2px] shrink-0 bg-[#b4b0aa]" />
    <div className="h-[38px] shrink-0 bg-black" />
    <div className="h-px shrink-0 bg-[#b4b0aa]" />
    <HScroll thumb="w-[27px]" />
  </div>
);

/* ---------- waveform ---------- */

const X0 = 3;
const ROUNDED_DOWN = new Set([1.5, 2, 2.5, 7, 8]);
const tx = (ns) => X0 + Math.floor(ns * 0.2004);
const kx = (k) => tx(k * 400) - (ROUNDED_DOWN.has(k) ? 1 : 0);
const rowTop = (i) => 60 + 20 * i;
const XE = kx(END);

const Levels = ({ lv, y }) => lv.map(([k, v], i) => {
  const x1 = kx(k), x2 = i + 1 < lv.length ? kx(lv[i + 1][0]) : XE;
  const h = { 1: 0, 0: 14, X: 7 };
  const prev = i ? lv[i - 1][1] : v;
  const c = v === "X" ? "#ff0000" : "#00ff00";
  const ya = Math.min(h[prev], h[v]), yb = Math.max(h[prev], h[v]);
  return (
    <g key={i}>
      {v !== "0" && <rect x={x1} y={y + h[v]} width={x2 - x1} height={15 - h[v]} fill={v === "X" ? "#400000" : "#004000"} />}
      <rect x={x1} y={y + h[v]} width={x2 - x1 + 1} height="1" fill={c} />
      {i > 0 && <rect x={x1} y={y + ya} width="1" height={yb - ya + 1} fill={prev === "X" ? "#ff0000" : "#00ff00"} />}
    </g>
  );
});

const Bus = ({ bus, y, glitch = [], ticks, off = 0 }) => bus.map(([k, v], i) => {
  const x1 = kx(k) + 0.5 + (i ? off : 0);
  const x2 = (i + 1 < bus.length ? kx(bus[i + 1][0]) + off : XE) + 0.5;
  const t = y + 0.5, m = y + 7.5, bt = y + 14.5;
  return (
    <g key={i}>
      <path d={`M${x1} ${m}L${x1 + 3.5} ${t}H${x2 - 3.5}L${x2} ${m}L${x2 - 3.5} ${bt}H${x1 + 3.5}Z`} fill="none" stroke="#00ff00" />
      {glitch.includes(k) && <path d={`M${x1 - 3} ${t}L${x1 + 1} ${bt}M${x1 + 3} ${t}L${x1 - 1} ${bt}`} stroke="#00ff00" strokeWidth="2" />}
      {ticks && i > 0 && i % 2 === 1 && <path d={`M${x1} ${t}V${bt}`} stroke="#00ff00" strokeDasharray="1 1" />}
      <text x={(x1 + x2) / 2 - 1} y={y + 11} textAnchor="middle" fill="#fff" fontSize="12" letterSpacing="-0.68">{v}</text>
    </g>
  );
});

const Wave = () => (
  <svg width="1008" height="801" viewBox="0 0 1008 801" className={`block bg-black ${UI}`} shapeRendering="crispEdges">
    <defs>
      <pattern id="dense" width="4" height="4" patternUnits="userSpaceOnUse">
        <path d="M0 0h1v1h-1zM1 1h1v1h-1zM3 1h1v1h-1zM2 2h1v1h-1zM1 3h1v1h-1zM3 3h1v1h-1z" fill="#00ff00" />
      </pattern>
    </defs>
    {SIGNALS.map((s, i) => (
      <g key={s.n}>
        {s.dense && <rect x={X0} y={rowTop(i)} width={XE - X0} height="14" fill="url(#dense)" />}
        {s.lv && <Levels lv={s.lv} y={rowTop(i)} />}
        {s.bus && <Bus bus={s.bus} y={rowTop(i)} glitch={s.glitch} ticks={s.ticks} off={s.off} />}
      </g>
    ))}
    {Array.from({ length: 11 }, (_, i) => <rect key={i} x={tx(i * 500)} y="57" width="1" height="705" fill="#b4b4b4" />)}
    {Array.from({ length: 51 }, (_, i) => <rect key={i} x={tx(i * 100)} y={i % 5 ? 52 : 40} width="1" height={i % 5 ? 4 : 16} fill="#fff" />)}
    {Array.from({ length: 10 }, (_, i) => (
      <text key={i} x={tx(i * 500) + 2} y="46" fill="#fff" fontSize="12" letterSpacing="-0.6">{(i * 500).toLocaleString("en-US")} ns</text>
    ))}
    <rect x={X0} y="56" width={XE - X0 + 1} height="1" fill="#fff" />
    <rect x={X0} y="761" width={XE - X0 + 1} height="1" fill="#fff" />
    <rect x="837" y="0" width="2" height="762" fill="#ffff00" />
    <rect x="837.500" y=".5" width="66" height="18" fill="#000" stroke="#ffff00" />
    <text x="839.500" y="13" fill="#ffff00" fontSize="12" letterSpacing="-0.5">4,166.667 ns</text>
    <text x="9" y="790" fill="#fff" fontSize="12" letterSpacing="-0.5">X1: 4,166.667 ns</text>
  </svg>
);

/* ---------- application ---------- */

const MENUS = [["F", "ile", "w-[34px]"], ["E", "dit", "w-[37px]"], ["V", "iew", "w-[42px]"], ["S", "imulation", "w-20"], ["W", "indow", "w-[63px]"], ["", "Layout", "w-[54px]"], ["H", "elp", "w-10"]];

export default function App() {
  return (
    <div lang="zh-CN" className={`flex h-[1050px] w-[1680px] flex-col overflow-hidden bg-[#eeebe7] text-[#101010] ${UI}`}>
      <Defs />
      <div className="flex h-16 shrink-0 flex-col bg-[#15191c] text-[#c3c4c4]">
        <div className="grid h-[30px] grid-cols-3 items-center pb-px text-[13.300px] font-bold">
          <div className="flex items-center pl-3.5">
            <span>Activities</span>
            <svg width="16" height="16" viewBox="0 0 16 16" className="ml-[29px]"><rect width="16" height="16" fill="url(#busW)" /><path d="M1 5h3V2h4v3h4V2M1 10h3V7h4v3" fill="none" stroke="#fff" /><circle cx="11" cy="11" r="3.200" fill="#d4d4d4" stroke="#666" strokeWidth="1.200" /></svg>
            <span className="pl-[9px]">Isimgui</span>
          </div>
          <div className="text-center text-[12.800px]">Wed 17:48</div>
          <div className="flex items-center justify-end pr-4">
            <span className="mr-[29px]">A</span>
            <svg width="16" height="16" viewBox="0 0 16 16" className="mr-3" fill="none" stroke="#5a5d5f" strokeWidth="1.500"><path d="M1 5.500h2.500L7 2v12l-3.500-3.500H1z" fill="#5a5d5f" /><path d="M9.500 5q2 3 0 6M12 3q3.500 5 0 10" /></svg>
            <svg width="13" height="14" viewBox="0 0 13 14" fill="none" stroke="#c3c4c4" strokeWidth="1.800"><path d="M6.500 0v7M3.500 2.800a5 5 0 1 0 6 0" /></svg>
          </div>
        </div>
        <div className="flex h-[34px] items-center text-[14.850px] font-bold text-[#d5d6d6]">
          <div className="w-8" />
          <div className="flex-1 text-center">ISim (P.20131013) - [Default.wcfg*]</div>
          <svg width="10" height="10" viewBox="0 0 10 10" className="ml-[11px] mr-[11px]" fill="none" stroke="#c9caca" strokeWidth="2"><path d="M1 1l8 8M9 1L1 9" /></svg>
        </div>
      </div>

      <div className="flex h-[30px] shrink-0 items-center border-b border-[#cdc9c4] bg-gradient-to-b from-[#efece9] to-[#e3e0da]">
        <div className="mr-1.5">{I.wave}</div>
        {MENUS.map(([u, rest, w]) => (
          <div key={rest} className={`whitespace-nowrap pt-0.5 text-[13px] font-medium ${w}`}>
            {u ? <><span className="underline underline-offset-[3px]">{u}</span>{rest}</> : <>La<span className="underline underline-offset-[3px]">y</span>out</>}
          </div>
        ))}
        <div className="ml-auto flex gap-px self-start pr-0.5 pt-0.5"><RoundBtn big t="min" /><RoundBtn big t="rest" /><div className="w-px" /><RoundBtn big t="close" /></div>
      </div>

      <div className="flex h-[34px] shrink-0 items-center border-b border-t border-b-[#b4b0aa] border-t-white">
        <Group w="w-[133px]" items={[I.new, I.open, I.save, "|", I.print]} />
        <Group w="w-[373px]" items={[I.cut, I.copy, I.paste, I.del, I.desel, "|", I.undo, I.redo, "|", I.find, I.findf, I.down, I.up, I.stop]} />
        <Group w="w-[125px]" items={[I.cascade, I.tileH, I.tileV, I.layer]} />
        <Group w="w-[67px]" items={[I.wrench, I.help]} />
        <Group w="w-[162px]" items={[<Mag t="in" />, <Mag t="out" />, <MagFit />, <Mag t="sel" />, "|", I.refresh]} />
        <div className="flex h-full items-center">
          <Grip />
          <TB><EdgePrev /></TB><TB><EdgeNext /></TB><Sep />
          <TB><Marker /></TB><TB><GreyPrev /></TB><TB><GreyNext /></TB><Sep />
          <TB>{I.restart}</TB><TB>{I.play}</TB><TB>{I.playh}</TB>
          <div className="ml-px mr-px flex h-7 w-[71px] shrink-0 rounded-[3px] border border-[#8f8b86] bg-white">
            <div className="flex w-[50px] items-center whitespace-nowrap border-r border-[#c2beb8] pl-1 text-[13px] font-medium">1.00us</div>
            <div className="flex flex-1 items-center justify-center bg-gradient-to-b from-[#f8f6f4] to-[#e8e5e1]">
              <svg width="10" height="7" viewBox="0 0 10 7" fill="none" stroke="#000" strokeWidth="2.200"><path d="M1 1l4 4 4-4" /></svg>
            </div>
          </div>
          <TB>{I.step}</TB><TB>{I.pause}</TB><Sep />
          <div className="ml-0.5 flex h-[30px] w-[101px] shrink-0 items-center rounded-[3px] border border-[#8f8b86] bg-gradient-to-b from-[#f8f6f4] to-[#e6e2de] pl-[9px]">
            {I.relaunch}
            <span className="whitespace-nowrap pl-0.5 text-[13px] font-medium">Re-launch</span>
          </div>
        </div>
      </div>

      <div className="flex h-[850px] shrink-0">
        <InstancePanel />
        <Splitter w="w-1.5" />
        <ObjectsPanel />
        <Splitter w="w-[6px]" />
        <div className="flex flex-1 flex-col">
          <div className="flex h-[820px] shrink-0">
            <SideBar />
            <NamePanel />
            <Splitter w="w-1 border-x border-[#c2beb8]" pos="pt-[389px]" />
            <ValuePanel />
            <Splitter w="w-[5px] border-x border-[#c2beb8]" pos="pt-[389px]" />
            <div className="flex w-[1008px] shrink-0 flex-col pt-0.5">
              <Wave />
              <HScroll thumb="w-[327px]" />
            </div>
            <div className="w-0.5 shrink-0 border-l border-[#b4b0aa]" />
            <VScroll className="mt-px h-[818px]" />
          </div>
          <div className="flex h-[30px] shrink-0">
            <div className="flex w-[698px] shrink-0 items-center border-b-[3px] border-r border-[#8f8b86] border-b-[#5682b4] bg-gradient-to-b from-[#e6e2df] to-[#f6f3f0] pl-1.5 pr-2.5">
              {I.wave}
              <span className="flex-1 pt-0.5 text-center text-[12.900px] font-medium">Default.wcfg*</span>
              <svg width="12" height="12" viewBox="0 0 12 12" fill="none" stroke="#111"><path d="M1.500 .5l8 10.500" strokeWidth="2.600" /><path d="M11 .5L1 11.500M7 11.500h4.500" strokeWidth="1.300" /></svg>
            </div>
            <div className="mt-px flex-1 border-t border-[#8f8b86]" />
          </div>
        </div>
      </div>

      <div className="flex h-9 shrink-0 items-center border-b border-r border-t border-[#a09c97] border-t-white text-[13px] font-medium">
        <svg width="24" height="20" viewBox="0 0 24 20" className="ml-[7px]"><rect x=".5" y=".5" width="23" height="19" fill="#b9d3f4" stroke="#5b8fd4" /><rect x="3" y="3" width="18" height="14" fill="#3d4148" stroke="#222" /><path d="M5 5.500l2 1.500-2 1.500M8.500 8.500h2.500" stroke="#fff" fill="none" /></svg>
        <span className="w-[60px] pl-1.5">Console</span>
        <svg width="17" height="17" viewBox="0 0 17 17" className="ml-2"><path d="M5.500 .5h6l5 5v6l-5 5h-6l-5-5v-6z" fill="#d4100c" /></svg>
        <span className="w-[94px] pl-[9px] tracking-[-0.1px]">Breakpoints</span>
        <svg width="22" height="22" viewBox="0 0 22 22"><path d="M1 2.500h7L9.500 1H18v14L2.500 18z" fill="#f4d63c" stroke="#98801a" /><Binoc dx={4} dy={5} k={1} /></svg>
        <span className="w-[136px] whitespace-nowrap pl-1.5 tracking-[-0.05px]">Find in Files Results</span>
        <svg width="24" height="24" viewBox="0 0 24 24" fill="none"><rect x=".8" y=".8" width="21" height="21" fill="#dfe9f8" stroke="#6a94d4" strokeWidth="1.500" /><rect x="2" y="3" width="18" height="3.500" fill="#8fb0e4" /><path d="M6 10h13M6 14h6M6 18h5" stroke="#a9b8cc" strokeWidth="1.800" /><Binoc dx={10} dy={10} k={0.8} c="#444" /></svg>
        <span className="pl-1.5">Search Results</span>
      </div>

      <div className="flex h-9 shrink-0 items-start justify-end pr-0.5 pt-[3px]">
        <div className="flex h-8 w-[147px] items-center whitespace-nowrap border-b border-l border-r border-t border-b-white border-l-[#a09c97] border-r-white border-t-[#a09c97] pl-1 text-[13px] font-medium tracking-[-0.13px]">Sim Time: 5,000,000 ps</div>
      </div>
    </div>
  );
}
